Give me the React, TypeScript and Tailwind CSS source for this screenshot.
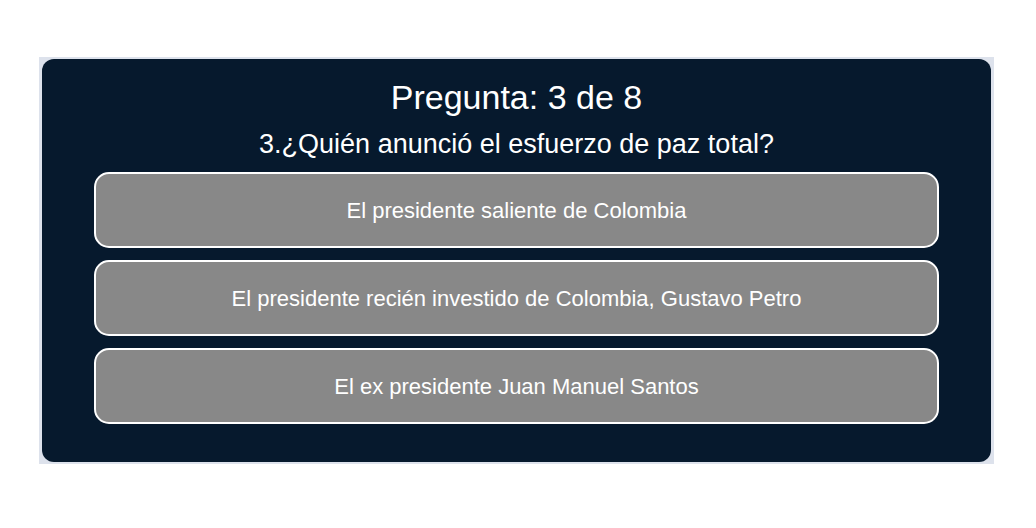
import React from 'react';

const options = [
  'El presidente saliente de Colombia',
  'El presidente recién investido de Colombia, Gustavo Petro',
  'El ex presidente Juan Manuel Santos',
];

export default function App() {
  return (
    <div className="w-[1036px] h-[528px] bg-white pt-[57px] pl-[39px]" style={{ fontFamily: '"Liberation Sans", Arial, sans-serif' }}>
      <div className="w-[955px] bg-[#dde2ec] px-[3px] py-[2px]">
        <div className="bg-[#06192d] rounded-[12px] pt-[19px] pb-[38px] text-white">
          <h1 className="text-center text-[34px] leading-[1.15]">Pregunta: 3 de 8</h1>
          <h2 className="mt-[12px] text-center text-[27px] leading-[1.15]">
            3.¿Quién anunció el esfuerzo de paz total?
          </h2>
          <div className="mt-[12px] w-[845px] mx-auto flex flex-col gap-[12px]">
            {options.map((opt) => (
              <button
                key={opt}
                className="h-[76px] w-full rounded-[15px] border-2 border-white bg-[#888888] text-white text-[22px] flex items-center justify-center"
              >
                {opt}
              </button>
            ))}
          </div>
        </div>
      </div>
    </div>
  );
}
